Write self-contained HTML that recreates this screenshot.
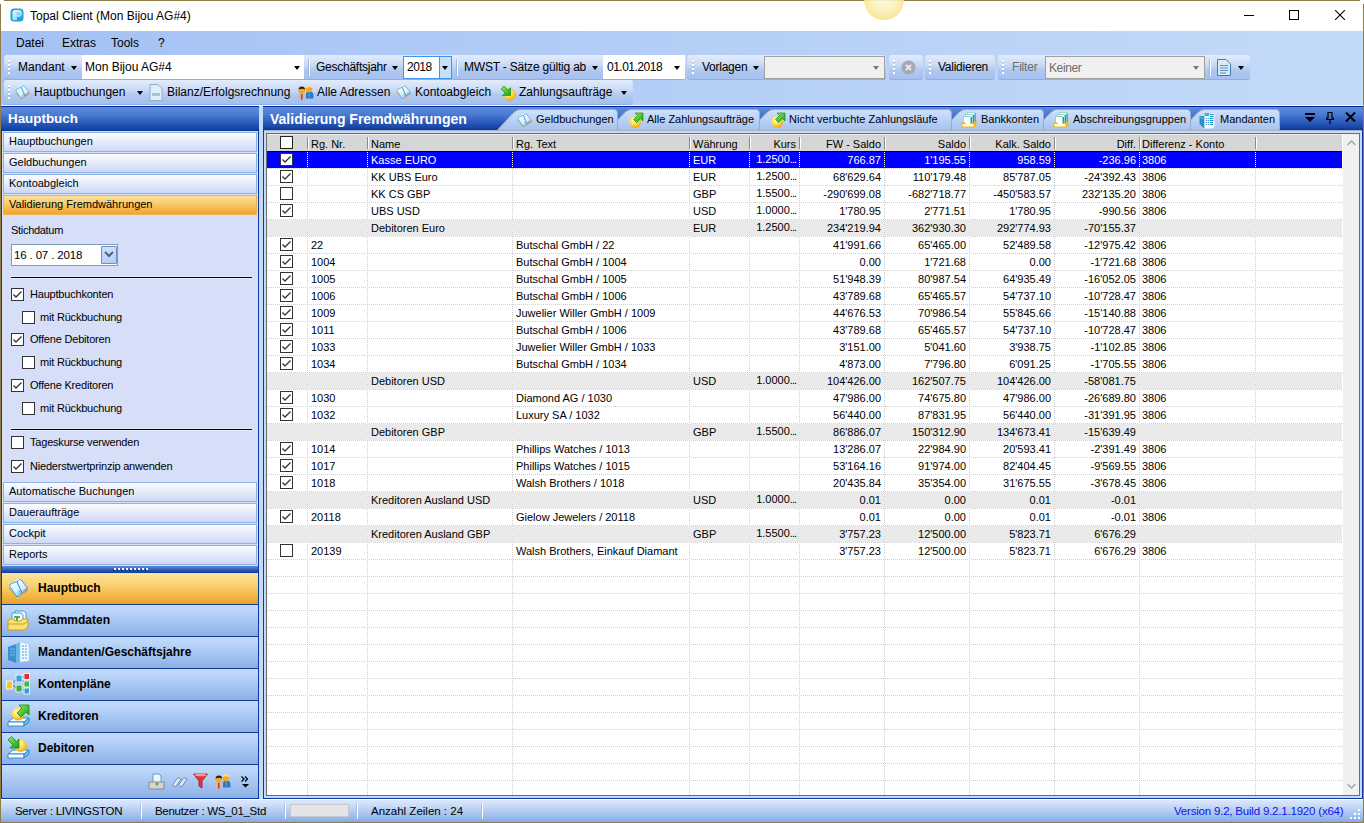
<!DOCTYPE html>
<html><head><meta charset="utf-8">
<style>
*{margin:0;padding:0;box-sizing:border-box}
html,body{width:1364px;height:823px;overflow:hidden;background:#c5daf8}
body{position:relative;font-family:"Liberation Sans",sans-serif;font-size:12px;color:#000}
.a{position:absolute}
.t{position:absolute;white-space:pre;line-height:14px}
/* window frame */
#frameT{left:4px;top:0;width:1356px;height:1px;background:#8f7d45}
#frameL{left:0;top:4px;width:1px;height:819px;background:#8f7d45}
#frameR{left:1363px;top:4px;width:1px;height:819px;background:#8f7d45}
#frameB{left:0;top:822px;width:1364px;height:1px;background:#8f7d45}
#dock{left:1px;top:31px;width:1362px;height:75px;background:linear-gradient(to right,#a3c1f4 0%,#b3cdf6 45%,#c4daf9 100%)}
.tb{position:absolute;height:25px;border-radius:3px;background:linear-gradient(to bottom,#e3ecfb 0%,#c9daf6 40%,#b0c9f0 60%,#a3bfee 100%);box-shadow:inset 0 -1px 0 #8fb0e4}
.grip{position:absolute;width:2px;height:14px;background:repeating-linear-gradient(to bottom,#fff 0 2px,#9ab5dc 2px 3px,transparent 3px 4px)}
.dd{position:absolute;width:0;height:0;border-left:3.5px solid transparent;border-right:3.5px solid transparent;border-top:4px solid #000}
.combo{position:absolute;background:#fff}
.vsep{position:absolute;width:2px;height:17px;border-left:1px solid #9fb7dc;border-right:1px solid #fff}
/* panels */
.phead{position:absolute;height:24px;background:linear-gradient(to bottom,#00259a 0,#00259a 1px,#5c8bdb 1px,#4a7bd2 35%,#2d5cbb 65%,#1845a8 90%,#003596 100%);color:#fff;font-weight:bold}
#lp{left:1px;top:106px;width:258px;height:693px;background:#d7def7;border:1px solid #0a3a9e;border-top:none}
.lbtn{position:absolute;left:3px;width:254px;height:20px;border:1px solid #8cb2e8;background:linear-gradient(to bottom,#fbfcff 0%,#e7edfb 45%,#cdd8f5 100%);font-size:11px;line-height:17px;padding-left:5px;white-space:pre}
.lbtn.on{border-color:#f0b050;background:linear-gradient(to bottom,#fde29a 0%,#f9c96a 45%,#f0a42c 100%)}
.nbtn{position:absolute;left:2px;width:256px;height:32px;background:linear-gradient(to bottom,#c5ddfb 0%,#abc9f3 45%,#8cb0e6 100%);border-bottom:1px solid #0a3a9e;font-weight:bold;font-size:12px;line-height:31px;padding-left:36px;white-space:pre}
.nbtn.on{background:linear-gradient(to bottom,#fce59b 0%,#f8cd6c 45%,#eea126 100%)}
.lbl{position:absolute;font-size:11px;white-space:pre;line-height:13px}
.chk{position:absolute;width:13px;height:13px;border:1px solid #333;background:#fff}
#rp{left:263px;top:106px;width:1100px;height:693px;background:#c5daf8;border:1px solid #0a3a9e;border-top:none}
#grid{left:266px;top:133px;width:1094px;height:663px;border:1px solid #6d6d6d;background:#fff;overflow:hidden}
#ghead{left:0;top:0;width:1075px;height:18px;background:#d6d6d6;border-bottom:1px solid #000;box-shadow:inset 0 1px 0 #ececec}
.hsep{position:absolute;top:3px;width:2px;height:12px;border-left:1px solid #8a8a8a;border-right:1px solid #fff}
.row{position:absolute;left:0;width:1075px;height:16px;font-size:11px}
.row.sel{background:#0000fe;color:#fff}
.row.grp{background:#eaeaea}
.c{position:absolute;top:0;line-height:17px;white-space:pre}
.cb{position:absolute;top:1px;width:13px;height:13px;line-height:0}
.hd{position:absolute;left:0;width:1075px;height:1px;background:repeating-linear-gradient(to right,#cecece 0 1px,#fff 1px 2px)}
.vds{position:absolute;width:1px;height:16px;background:repeating-linear-gradient(to bottom,#fff 0 1px,#0000fe 1px 2px)}
.vd{position:absolute;top:18px;width:1px;height:660px;background:repeating-linear-gradient(to bottom,#cecece 0 1px,#fff 1px 2px)}
#vscroll{left:1076px;top:0;width:16px;height:661px;background:#f0f0f0}
#status{left:1px;top:799px;width:1362px;height:23px;background:linear-gradient(to bottom,#ffffff 0,#ffffff 1px,#dce9fc 1px,#c3d7f6 35%,#a3c1ef 70%,#84abe7 100%)}
.ssep{position:absolute;top:5px;width:2px;height:16px;border-left:1px solid #a9bedd;border-right:1px solid #fff}
.tab{position:absolute;top:109px;height:21px;font-size:11px;line-height:21px;white-space:pre;color:#000}
</style></head><body>

<div class="a" style="left:0;top:0;width:1364px;height:31px;background:#fff"></div>
<!-- title bar -->

<svg class="a" style="left:10px;top:8px" width="14" height="14" viewBox="0 0 14 14"><defs><linearGradient id="tig" x1="0" y1="0" x2="1" y2="1"><stop offset="0" stop-color="#f4fbff"/><stop offset=".6" stop-color="#a9dcf4"/><stop offset="1" stop-color="#62bfea"/></linearGradient></defs><rect x="0.5" y="0.5" width="13" height="13" rx="3.5" fill="#1fa3da"/><path d="M2.5 3.5 Q3 2 5 2 H9.5 Q12 2.2 12 5.5 Q12 9 9 9 H7 V12 H3.5 Q2.5 12 2.5 11 Z" fill="url(#tig)"/><path d="M6.5 4.2 H9 Q10 4.5 10 5.6 Q10 6.8 9 7 H6.5 Z" fill="#6ec6ee" opacity=".6"/></svg>
<div class="t" style="left:30px;top:9px;font-size:12px">Topal Client (Mon Bijou AG#4)</div>
<div class="a" style="left:1244px;top:15px;width:10px;height:1px;background:#000"></div>
<div class="a" style="left:1289px;top:10px;width:10px;height:10px;border:1px solid #000"></div>
<svg class="a" style="left:1335px;top:10px" width="10" height="10" viewBox="0 0 10 10"><path d="M0 0 L10 10 M10 0 L0 10" stroke="#000" stroke-width="1.1"/></svg>

<!-- dock -->
<div class="a" id="dock"></div>
<div class="t" style="left:16px;top:36px">Datei</div>
<div class="t" style="left:62px;top:36px">Extras</div>
<div class="t" style="left:111px;top:36px">Tools</div>
<div class="t" style="left:158px;top:36px">?</div>

<!-- toolbar 1 -->
<div class="tb" style="left:4px;top:55px;width:682px"></div>
<div class="grip" style="left:8px;top:60px"></div>
<div class="t" style="left:18px;top:60px">Mandant</div>
<div class="dd" style="left:71px;top:66px"></div>
<div class="combo" style="left:82px;top:55px;width:222px;height:24px"></div>
<div class="t" style="left:85px;top:60px">Mon Bijou AG#4</div>
<div class="dd" style="left:294px;top:66px"></div>
<div class="vsep" style="left:308px;top:59px"></div>
<div class="t" style="left:316px;top:60px;letter-spacing:-0.25px">Geschäftsjahr</div>
<div class="dd" style="left:392px;top:66px"></div>
<div class="combo" style="left:403px;top:56px;width:49px;height:23px;border:1px solid #3c96f0"></div>
<div class="a" style="left:439px;top:57px;width:12px;height:21px;background:#c7e0fa;border-left:1px solid #3c96f0"></div>
<div class="t" style="left:407px;top:60px;letter-spacing:-0.5px">2018</div>
<div class="dd" style="left:442px;top:66px"></div>
<div class="vsep" style="left:456px;top:59px"></div>
<div class="t" style="left:464px;top:60px;letter-spacing:-0.2px">MWST - Sätze gültig ab</div>
<div class="dd" style="left:592px;top:66px"></div>
<div class="combo" style="left:603px;top:55px;width:82px;height:24px"></div>
<div class="t" style="left:607px;top:60px;letter-spacing:-0.5px">01.01.2018</div>
<div class="dd" style="left:674px;top:66px"></div>

<div class="tb" style="left:687px;top:55px;width:199px"></div>
<div class="grip" style="left:692px;top:60px"></div>
<div class="t" style="left:702px;top:60px;letter-spacing:-0.25px">Vorlagen</div>
<div class="dd" style="left:753px;top:66px"></div>
<div class="combo" style="left:764px;top:56px;width:121px;height:23px;background:#f0f0f0;border:1px solid #a0a0a0"></div>
<div class="dd" style="left:873px;top:66px;border-top-color:#777"></div>

<div class="tb" style="left:889px;top:55px;width:34px"></div>
<div class="grip" style="left:893px;top:60px"></div>
<svg class="a" style="left:901px;top:60px" width="15" height="15" viewBox="0 0 15 15"><circle cx="7.5" cy="7.5" r="7" fill="#a5a9b0"/><path d="M5 5 L10 10 M10 5 L5 10" stroke="#e8e8e8" stroke-width="2"/></svg>

<div class="tb" style="left:925px;top:55px;width:70px"></div>
<div class="grip" style="left:929px;top:60px"></div>
<div class="t" style="left:938px;top:60px;letter-spacing:-0.25px">Validieren</div>

<div class="tb" style="left:998px;top:55px;width:252px"></div>
<div class="grip" style="left:1002px;top:60px"></div>
<div class="t" style="left:1012px;top:60px;color:#6d6d6d;letter-spacing:-0.2px">Filter</div>
<div class="combo" style="left:1045px;top:56px;width:160px;height:23px;background:#f0f0f0;border:1px solid #a0a0a0"></div>
<div class="t" style="left:1049px;top:61px;color:#6d6d6d;letter-spacing:-0.4px">Keiner</div>
<div class="dd" style="left:1193px;top:66px;border-top-color:#777"></div>
<div class="vsep" style="left:1209px;top:59px"></div>
<svg class="a" style="left:1216px;top:59px" width="16" height="17" viewBox="0 0 16 17"><path d="M1.5 0.5 H10 L14.5 5 V16.5 H1.5 Z" fill="#dbe9f7" stroke="#3f7fb8"/><path d="M4 6.5 H12 M4 9 H12 M4 11.5 H12 M4 14 H10" stroke="#5b8fc4"/></svg>
<div class="dd" style="left:1238px;top:66px"></div>

<!-- toolbar 2 -->
<div class="tb" style="left:4px;top:80px;width:629px"></div>
<div class="grip" style="left:8px;top:85px"></div>
<svg class="a" style="left:14px;top:84px" width="17" height="17" viewBox="0 0 23 23"><path d="M1 8 L13 1 L22 12 L10 22 Z" fill="#fff"/><path d="M2 10 L10 20.5 L21 12 L21 13.5 L10 21.5 L2 11.5 Z" fill="#d0902c"/><path d="M2 8 L7 5.5 L10 4.5 L15 16 L10 20 Z" fill="url(#pg)" stroke="#2f9fdc" stroke-width="1"/><path d="M10 4.5 L13.5 2 L21 11.5 L15 16 Z" fill="url(#pg)" stroke="#2f9fdc" stroke-width="1"/><path d="M12 15 L20 12" stroke="#e03a3a" stroke-width="1" stroke-dasharray="1 1.5"/></svg>
<div class="t" style="left:34px;top:85px">Hauptbuchungen</div>
<div class="dd" style="left:137px;top:91px"></div>
<svg class="a" style="left:149px;top:84px" width="14" height="17" viewBox="0 0 14 17"><path d="M1 0.5 H9 L13 4.5 V16.5 H1 Z" fill="#e1ecf5" stroke="#8fb0cc"/><rect x="3" y="9" width="8" height="3" fill="#9cc6e6"/></svg>
<div class="t" style="left:167px;top:85px">Bilanz/Erfolgsrechnung</div>
<svg class="a" style="left:297px;top:84px" width="17" height="17" viewBox="0 0 17 17"><path d="M9 10 Q9 7.5 12.5 7.5 Q16.5 7.5 16.5 11 V14.5 H9 Z" fill="#2a78d8"/><path d="M12.2 8 V13" stroke="#5ac040" stroke-width="1"/><circle cx="12" cy="5" r="3.3" fill="#f7a81a"/><path d="M8.7 4 Q9 1 12 1 Q15.3 1 15.3 4 Q12 2.6 8.7 4 Z" fill="#f5dca0"/><path d="M1 12 Q1 9 4.5 9 Q8.5 9 8.5 12 V16 H1 Z" fill="#bdbdbd"/><path d="M4.8 10 V15.5" stroke="#e81010" stroke-width="1.3"/><circle cx="4.8" cy="6.5" r="3.3" fill="#f7a81a"/><path d="M1.5 5.5 Q1.8 2.5 4.8 2.5 Q8 2.5 8.1 5.5 Q4.8 4 1.5 5.5 Z" fill="#222"/></svg>
<div class="t" style="left:317px;top:85px">Alle Adressen</div>
<svg class="a" style="left:395px;top:84px" width="17" height="17" viewBox="0 0 23 23"><path d="M1 8 L13 1 L22 12 L10 22 Z" fill="#fff"/><path d="M2 10 L10 20.5 L21 12 L21 13.5 L10 21.5 L2 11.5 Z" fill="#d0902c"/><path d="M2 8 L7 5.5 L10 4.5 L15 16 L10 20 Z" fill="url(#pg)" stroke="#2f9fdc" stroke-width="1"/><path d="M10 4.5 L13.5 2 L21 11.5 L15 16 Z" fill="url(#pg)" stroke="#2f9fdc" stroke-width="1"/><path d="M12 15 L20 12" stroke="#e03a3a" stroke-width="1" stroke-dasharray="1 1.5"/></svg>
<div class="t" style="left:415px;top:85px">Kontoabgleich</div>
<div class="a" style="left:500px;top:85px;line-height:0"><svg width="16" height="16" viewBox="0 0 16 16"><circle cx="9.5" cy="9.5" r="6.3" fill="url(#gold)"/><path d="M10.5 2.5 V10.5 H2.5 L5 8 L1 4 L4 1 L8 5 Z" fill="url(#grn)" stroke="#109010" stroke-width=".7"/></svg></div>
<div class="t" style="left:519px;top:85px">Zahlungsaufträge</div>
<div class="dd" style="left:621px;top:91px"></div>

<div class="a" style="left:1px;top:105px;width:1362px;height:1px;background:#f4f8ff"></div>
<!-- left panel -->
<div class="a" id="lp"></div>
<div class="phead" style="left:1px;top:106px;width:258px;height:25px;font-size:13.4px;line-height:26px;padding-left:7px">Hauptbuch</div>
<div class="lbtn" style="top:132px">Hauptbuchungen</div>
<div class="lbtn" style="top:153px">Geldbuchungen</div>
<div class="lbtn" style="top:174px">Kontoabgleich</div>
<div class="lbtn on" style="top:195px">Validierung Fremdwährungen</div>
<div class="lbl" style="left:11px;top:224px;letter-spacing:-0.3px">Stichdatum</div>
<div class="a" style="left:11px;top:244px;width:107px;height:22px;background:#fff;border:1px solid #7f9db9"></div>
<div class="lbl" style="left:14px;top:249px;font-size:11.5px;letter-spacing:-0.15px">16 . 07 . 2018</div>
<div class="a" style="left:101px;top:246px;width:16px;height:18px;background:linear-gradient(#cde0fa,#b5d0f6);border:1px solid #6f8fbf;border-radius:1px"></div>
<svg class="a" style="left:104px;top:251px" width="10" height="7" viewBox="0 0 10 7"><path d="M1 1 L5 5 L9 1" stroke="#4d6185" stroke-width="2" fill="none"/></svg>
<div class="a" style="left:11px;top:276px;width:241px;height:3px;background:#000;border-top:1px solid #e8edfc;border-bottom:1px solid #e8edfc"></div>
<div class="a" style="left:11px;top:288px;width:13px;height:13px;line-height:0"><svg width="13" height="13" viewBox="0 0 13 13"><rect x="0.5" y="0.5" width="12" height="12" fill="#fff" stroke="#333"/><path d="M2.5 6.5 L5 9 L10.5 3.5" fill="none" stroke="#333" stroke-width="1.3"/></svg></div><div class="lbl" style="left:30px;top:288px;letter-spacing:-0.2px">Hauptbuchkonten</div><div class="a" style="left:22px;top:311px;width:13px;height:13px;line-height:0"><svg width="13" height="13" viewBox="0 0 13 13"><rect x="0.5" y="0.5" width="12" height="12" fill="#fff" stroke="#333"/></svg></div><div class="lbl" style="left:40px;top:311px;letter-spacing:-0.2px">mit Rückbuchung</div><div class="a" style="left:11px;top:333px;width:13px;height:13px;line-height:0"><svg width="13" height="13" viewBox="0 0 13 13"><rect x="0.5" y="0.5" width="12" height="12" fill="#fff" stroke="#333"/><path d="M2.5 6.5 L5 9 L10.5 3.5" fill="none" stroke="#333" stroke-width="1.3"/></svg></div><div class="lbl" style="left:30px;top:333px;letter-spacing:-0.2px">Offene Debitoren</div><div class="a" style="left:22px;top:356px;width:13px;height:13px;line-height:0"><svg width="13" height="13" viewBox="0 0 13 13"><rect x="0.5" y="0.5" width="12" height="12" fill="#fff" stroke="#333"/></svg></div><div class="lbl" style="left:40px;top:356px;letter-spacing:-0.2px">mit Rückbuchung</div><div class="a" style="left:11px;top:379px;width:13px;height:13px;line-height:0"><svg width="13" height="13" viewBox="0 0 13 13"><rect x="0.5" y="0.5" width="12" height="12" fill="#fff" stroke="#333"/><path d="M2.5 6.5 L5 9 L10.5 3.5" fill="none" stroke="#333" stroke-width="1.3"/></svg></div><div class="lbl" style="left:30px;top:379px;letter-spacing:-0.2px">Offene Kreditoren</div><div class="a" style="left:22px;top:402px;width:13px;height:13px;line-height:0"><svg width="13" height="13" viewBox="0 0 13 13"><rect x="0.5" y="0.5" width="12" height="12" fill="#fff" stroke="#333"/></svg></div><div class="lbl" style="left:40px;top:402px;letter-spacing:-0.2px">mit Rückbuchung</div><div class="a" style="left:11px;top:436px;width:13px;height:13px;line-height:0"><svg width="13" height="13" viewBox="0 0 13 13"><rect x="0.5" y="0.5" width="12" height="12" fill="#fff" stroke="#333"/></svg></div><div class="lbl" style="left:30px;top:436px;letter-spacing:-0.2px">Tageskurse verwenden</div><div class="a" style="left:11px;top:460px;width:13px;height:13px;line-height:0"><svg width="13" height="13" viewBox="0 0 13 13"><rect x="0.5" y="0.5" width="12" height="12" fill="#fff" stroke="#333"/><path d="M2.5 6.5 L5 9 L10.5 3.5" fill="none" stroke="#333" stroke-width="1.3"/></svg></div><div class="lbl" style="left:30px;top:460px;letter-spacing:-0.2px">Niederstwertprinzip anwenden</div>
<div class="a" style="left:11px;top:428px;width:241px;height:3px;background:#000;border-top:1px solid #e8edfc;border-bottom:1px solid #e8edfc"></div>
<div class="lbtn" style="top:482px">Automatische Buchungen</div>
<div class="lbtn" style="top:503px">Daueraufträge</div>
<div class="lbtn" style="top:524px">Cockpit</div>
<div class="lbtn" style="top:545px">Reports</div>
<div class="a" style="left:2px;top:566px;width:256px;height:7px;background:linear-gradient(#5a89da,#0a3aa0)"></div>
<div class="a" style="left:113px;top:569px;width:36px;height:2px;background:repeating-linear-gradient(to right,#1b2f6a 0 2px,transparent 2px 4px)"></div><div class="a" style="left:114px;top:568px;width:36px;height:2px;background:repeating-linear-gradient(to right,#fff 0 2px,transparent 2px 4px)"></div>
<div class="nbtn on" style="top:573px">Hauptbuch</div>
<div class="nbtn" style="top:605px">Stammdaten</div>
<div class="nbtn" style="top:637px">Mandanten/Geschäftsjahre</div>
<div class="nbtn" style="top:669px">Kontenpläne</div>
<div class="nbtn" style="top:701px">Kreditoren</div>
<div class="nbtn" style="top:733px">Debitoren</div>
<div class="a" style="left:2px;top:765px;width:256px;height:33px;background:linear-gradient(to bottom,#c5ddfb 0%,#abc9f3 45%,#8cb0e6 100%)"></div>
<svg width="0" height="0" style="position:absolute"><defs><radialGradient id="gold" cx=".4" cy=".35" r=".7"><stop offset="0" stop-color="#fffbd8"/><stop offset=".45" stop-color="#fde25a"/><stop offset="1" stop-color="#f2a010"/></radialGradient><linearGradient id="pg" x1="0" y1="0" x2="1" y2="1"><stop offset="0" stop-color="#ffffff"/><stop offset=".6" stop-color="#d8f0fc"/><stop offset="1" stop-color="#5ab8ea"/></linearGradient><linearGradient id="grn" x1="0" y1="0" x2="1" y2="1"><stop offset="0" stop-color="#8ef25a"/><stop offset="1" stop-color="#1e9a1e"/></linearGradient></defs></svg><svg class="a" style="left:7px;top:577px" width="23" height="23" viewBox="0 0 23 23"><path d="M1 8 L13 1 L22 12 L10 22 Z" fill="#fff"/><path d="M2 10 L10 20.5 L21 12 L21 13.5 L10 21.5 L2 11.5 Z" fill="#d0902c"/><path d="M2 8 L7 5.5 L10 4.5 L15 16 L10 20 Z" fill="url(#pg)" stroke="#2f9fdc" stroke-width="1"/><path d="M10 4.5 L13.5 2 L21 11.5 L15 16 Z" fill="url(#pg)" stroke="#2f9fdc" stroke-width="1"/><path d="M12 15 L20 12" stroke="#e03a3a" stroke-width="1" stroke-dasharray="1 1.5"/></svg><svg class="a" style="left:7px;top:610px" width="22" height="21" viewBox="0 0 22 21"><path d="M8 1 H17 L19 3 V13 H8 Z" fill="#eef8fd" stroke="#3ba0d6"/><path d="M5 3 H14 L16 5 V14 H5 Z" fill="#f6fbff" stroke="#3ba0d6"/><path d="M7 7 H13 M10 7 V14" stroke="#1f9a2a" stroke-width="1.6"/><path d="M1 11 L3 9 H7 L8 11 H14 L15 9 H21 V16 L18 20 H1 Z" fill="#f7e27a" stroke="#d69b12"/><path d="M1 14 H17 L21 11" stroke="#d69b12" fill="none"/></svg><svg class="a" style="left:7px;top:640px" width="23" height="24" viewBox="0 0 23 24"><path d="M1 7 L9 4 V23 L1 20 Z" fill="#3c8fd0"/><path d="M9 4 L13 2 V22 L9 23 Z" fill="#6ab8e8"/><path d="M13 2 L22 4 V21 L13 22 Z" fill="#f4fbff" stroke="#9ad2f0" stroke-width=".6"/><path d="M15 6 H21 M15 9 H21 M15 12 H21 M15 15 H21 M15 18 H21" stroke="#2f9fdc" stroke-width="1.2" stroke-dasharray="2 1"/><path d="M3 9 H8 M3 12 H8 M3 15 H8" stroke="#75b8e6" stroke-width="1"/></svg><svg class="a" style="left:6px;top:673px" width="24" height="22" viewBox="0 0 24 22"><path d="M6 10 L11 6 M6 12 L11 15 M15 5 L19 3 M15 6 L19 10 M15 15 L19 18" stroke="#5a6a7a" stroke-width="1"/><rect x="0.5" y="8" width="6" height="8" fill="#f7c81e" stroke="#fff" stroke-width=".8"/><rect x="10" y="2" width="6" height="7" fill="#35a2de" stroke="#fff" stroke-width=".8"/><rect x="10" y="12" width="6" height="7" fill="#3cb03a" stroke="#fff" stroke-width=".8"/><rect x="18" y="0.5" width="5.5" height="6" fill="#e2302a" stroke="#fff" stroke-width=".8"/><rect x="18" y="8" width="5.5" height="6" fill="#45b83a" stroke="#fff" stroke-width=".8"/><rect x="18" y="15" width="5.5" height="6" fill="#35a2de" stroke="#fff" stroke-width=".8"/></svg><svg class="a" style="left:7px;top:704px" width="23" height="24" viewBox="0 0 23 24"><path d="M1 18 L6 14 H22 L17 18 Z" fill="#f2fbff" stroke="#2a8fd8" stroke-width="1"/><path d="M1 18 H17 V22 H1 Z" fill="#ffffff" stroke="#2a8fd8" stroke-width="1"/><path d="M17 18 L22 14 V18 L17 22 Z" fill="#64bff0" stroke="#2a8fd8" stroke-width="1"/><circle cx="11" cy="10" r="6.5" fill="url(#gold)"/><path d="M12 1 H22 V11 L19 8 L14 13 L10 9 L15 4 Z" fill="url(#grn)" stroke="#109010" stroke-width=".8"/></svg><svg class="a" style="left:7px;top:736px" width="23" height="24" viewBox="0 0 23 24"><path d="M1 18 L6 14 H22 L17 18 Z" fill="#f2fbff" stroke="#2a8fd8" stroke-width="1"/><path d="M1 18 H17 V22 H1 Z" fill="#ffffff" stroke="#2a8fd8" stroke-width="1"/><path d="M17 18 L22 14 V18 L17 22 Z" fill="#64bff0" stroke="#2a8fd8" stroke-width="1"/><circle cx="13.5" cy="9.5" r="6.5" fill="url(#gold)"/><path d="M12 3 V12 H3 L6 9 L1 4 L4.5 0.5 L9.5 5.5 Z" fill="url(#grn)" stroke="#109010" stroke-width=".8"/></svg><svg class="a" style="left:148px;top:773px" width="17" height="17" viewBox="0 0 17 17"><path d="M5 1 H11 L13 3 V11 H5 Z" fill="#eef6fc" stroke="#5fa0d0"/><path d="M1 9 H16 V16 H1 Z" fill="#d4d4d4" stroke="#8a8a8a"/><path d="M7.5 11 H10.5 M9 9.5 V12.5" stroke="#2a2" stroke-width="1.2"/></svg><svg class="a" style="left:171px;top:774px" width="17" height="15" viewBox="0 0 17 15"><path d="M1.5 11 L7 3.5 L10 5 L4.5 13 Z M7.5 11 L13 3.5 L16 5 L10.5 13 Z" fill="#dfe8f5" stroke="#6b84b0" stroke-width=".9"/></svg><svg class="a" style="left:193px;top:773px" width="15" height="16" viewBox="0 0 15 16"><path d="M0.5 1 H14.5 L9 8 V15 L6 13 V8 Z" fill="#e0353a" stroke="#a01a1a" stroke-width=".8"/><ellipse cx="7.5" cy="2" rx="6" ry="1.3" fill="#f59a9a"/></svg><svg class="a" style="left:241px;top:776px" width="9" height="12" viewBox="0 0 9 12"><path d="M0.5 0.5 L3 3 L0.5 5.5 M4 0.5 L6.5 3 L4 5.5" stroke="#000" stroke-width="1.2" fill="none"/><path d="M1 8 H8 L4.5 11.5 Z" fill="#000"/></svg><svg class="a" style="left:214px;top:773px" width="17" height="17" viewBox="0 0 17 17"><path d="M9 10 Q9 7.5 12.5 7.5 Q16.5 7.5 16.5 11 V14.5 H9 Z" fill="#2a78d8"/><path d="M12.2 8 V13" stroke="#5ac040" stroke-width="1"/><circle cx="12" cy="5" r="3.3" fill="#f7a81a"/><path d="M8.7 4 Q9 1 12 1 Q15.3 1 15.3 4 Q12 2.6 8.7 4 Z" fill="#f5dca0"/><path d="M1 12 Q1 9 4.5 9 Q8.5 9 8.5 12 V16 H1 Z" fill="#bdbdbd"/><path d="M4.8 10 V15.5" stroke="#e81010" stroke-width="1.3"/><circle cx="4.8" cy="6.5" r="3.3" fill="#f7a81a"/><path d="M1.5 5.5 Q1.8 2.5 4.8 2.5 Q8 2.5 8.1 5.5 Q4.8 4 1.5 5.5 Z" fill="#222"/></svg>

<!-- right panel -->
<div class="a" id="rp"></div>
<div class="phead" style="left:263px;top:106px;width:1100px;font-size:14px;line-height:26px;padding-left:7px">Validierung Fremdwährungen</div>
<svg width="0" height="0" style="position:absolute"><defs><linearGradient id="tg" x1="0" y1="0" x2="0" y2="1"><stop offset="0" stop-color="#cfe1fb"/><stop offset=".5" stop-color="#bad2f7"/><stop offset="1" stop-color="#a4c1f0"/></linearGradient></defs></svg><svg class="a" style="left:1181px;top:109px" width="99" height="21" viewBox="0 0 99 21"><path d="M0 21.5 C7 14 13 7 17.5 3 Q20 0.5 23.5 0.5 H95 Q98.5 0.5 98.5 4 V21.5" fill="url(#tg)" stroke="#98aac6" stroke-width="1"/></svg><div class="a" style="left:1199px;top:112px;line-height:0"><svg width="16" height="17" viewBox="0 0 16 17"><path d="M0.5 4 H5.5 V16.5 L0.5 12 Z" fill="#2d8ccc"/><path d="M1.5 5 L4 7" stroke="#5ac8c0" stroke-width="1.5"/><path d="M5.5 1 H10.5 V16.5 H5.5 Z" fill="#f8fdff"/><rect x="5.5" y="1" width="5" height="3" fill="#3dbfb0"/><path d="M6.8 6.5 h1 M8.8 6.5 h1 M6.8 8.5 h1 M8.8 8.5 h1 M6.8 10.5 h1 M8.8 10.5 h1 M6.8 12.5 h1 M8.8 12.5 h1" stroke="#1a7fc8" stroke-width="1.2"/><path d="M10.5 1.5 H15.5 V15 L12 16.5 H10.5 Z" fill="#fff"/><path d="M11 2.5 H14.5 M11 4.5 H14.5 M11 6.5 H14.5 M11 8.5 H14.5 M11 10.5 H14 M11 12.5 H14" stroke="#1a9ad8" stroke-width="1.1"/></svg></div><div class="tab" style="left:1220px">Mandanten</div><svg class="a" style="left:1034px;top:109px" width="157" height="21" viewBox="0 0 157 21"><path d="M0 21.5 C7 14 13 7 17.5 3 Q20 0.5 23.5 0.5 H153 Q156.5 0.5 156.5 4 V21.5" fill="url(#tg)" stroke="#98aac6" stroke-width="1"/></svg><div class="a" style="left:1053px;top:112px;line-height:0"><svg width="16" height="16" viewBox="0 0 16 16"><rect x="6.5" y="0.5" width="7" height="9" fill="#fff" stroke="#8fd3c8" stroke-width=".9"/><rect x="4.5" y="2.5" width="7" height="9" fill="#fff" stroke="#8fd3c8" stroke-width=".9"/><rect x="2.5" y="4.5" width="7" height="9" fill="#fff" stroke="#8fd3c8" stroke-width=".9"/><path d="M10.5 5 V13 M12.5 3 V12 M14.2 1.5 V10" stroke="#1f8fd8" stroke-width="1"/><path d="M0.5 10.5 H4 L5.5 12.5 H8.5 L10 10.5 H13 L15.5 8.5 V13 L13 15.5 H0.5 Z" fill="#f2b90c"/><path d="M1.5 12 H12.5 V14.5 H1.5 Z" fill="#fffbe8"/></svg></div><div class="tab" style="left:1073px">Abschreibungsgruppen</div><svg class="a" style="left:942px;top:109px" width="102" height="21" viewBox="0 0 102 21"><path d="M0 21.5 C7 14 13 7 17.5 3 Q20 0.5 23.5 0.5 H98 Q101.5 0.5 101.5 4 V21.5" fill="url(#tg)" stroke="#98aac6" stroke-width="1"/></svg><div class="a" style="left:961px;top:112px;line-height:0"><svg width="16" height="16" viewBox="0 0 16 16"><rect x="6.5" y="0.5" width="7" height="9" fill="#fff" stroke="#8fd3c8" stroke-width=".9"/><rect x="4.5" y="2.5" width="7" height="9" fill="#fff" stroke="#8fd3c8" stroke-width=".9"/><rect x="2.5" y="4.5" width="7" height="9" fill="#fff" stroke="#8fd3c8" stroke-width=".9"/><path d="M10.5 5 V13 M12.5 3 V12 M14.2 1.5 V10" stroke="#1f8fd8" stroke-width="1"/><path d="M0.5 10.5 H4 L5.5 12.5 H8.5 L10 10.5 H13 L15.5 8.5 V13 L13 15.5 H0.5 Z" fill="#f2b90c"/><path d="M1.5 12 H12.5 V14.5 H1.5 Z" fill="#fffbe8"/></svg></div><div class="tab" style="left:981px">Bankkonten</div><svg class="a" style="left:750px;top:109px" width="202" height="21" viewBox="0 0 202 21"><path d="M0 21.5 C7 14 13 7 17.5 3 Q20 0.5 23.5 0.5 H198 Q201.5 0.5 201.5 4 V21.5" fill="url(#tg)" stroke="#98aac6" stroke-width="1"/></svg><div class="a" style="left:770px;top:112px;line-height:0"><svg width="16" height="16" viewBox="0 0 16 16"><circle cx="7" cy="10" r="6" fill="url(#gold)"/><path d="M7 1 H15 V9 L12.5 6.5 L8.5 10.5 L5.5 7.5 L9.5 3.5 Z" fill="url(#grn)" stroke="#109010" stroke-width=".7"/></svg></div><div class="tab" style="left:789px">Nicht verbuchte Zahlungsläufe</div><svg class="a" style="left:608px;top:109px" width="152" height="21" viewBox="0 0 152 21"><path d="M0 21.5 C7 14 13 7 17.5 3 Q20 0.5 23.5 0.5 H148 Q151.5 0.5 151.5 4 V21.5" fill="url(#tg)" stroke="#98aac6" stroke-width="1"/></svg><div class="a" style="left:628px;top:112px;line-height:0"><svg width="16" height="16" viewBox="0 0 16 16"><circle cx="7" cy="10" r="6" fill="url(#gold)"/><path d="M7 1 H15 V9 L12.5 6.5 L8.5 10.5 L5.5 7.5 L9.5 3.5 Z" fill="url(#grn)" stroke="#109010" stroke-width=".7"/></svg></div><div class="tab" style="left:647px">Alle Zahlungsaufträge</div><svg class="a" style="left:497px;top:109px" width="121" height="21" viewBox="0 0 121 21"><path d="M0 21.5 C7 14 13 7 17.5 3 Q20 0.5 23.5 0.5 H117 Q120.5 0.5 120.5 4 V21.5" fill="url(#tg)" stroke="#98aac6" stroke-width="1"/></svg><div class="a" style="left:516px;top:112px;line-height:0"><svg width="17" height="17" viewBox="0 0 23 23"><path d="M1 8 L13 1 L22 12 L10 22 Z" fill="#fff"/><path d="M2 10 L10 20.5 L21 12 L21 13.5 L10 21.5 L2 11.5 Z" fill="#d0902c"/><path d="M2 8 L7 5.5 L10 4.5 L15 16 L10 20 Z" fill="url(#pg)" stroke="#2f9fdc" stroke-width="1"/><path d="M10 4.5 L13.5 2 L21 11.5 L15 16 Z" fill="url(#pg)" stroke="#2f9fdc" stroke-width="1"/><path d="M12 15 L20 12" stroke="#e03a3a" stroke-width="1" stroke-dasharray="1 1.5"/></svg></div><div class="tab" style="left:536px">Geldbuchungen</div><svg class="a" style="left:1304px;top:113px" width="12" height="10" viewBox="0 0 12 10"><rect x="1" y="0" width="10" height="2" fill="#000"/><path d="M1 4 H11 L6 9 Z" fill="#000"/></svg><svg class="a" style="left:1326px;top:112px" width="8" height="12" viewBox="0 0 8 12"><path d="M2 0.5 H6 V6 H7.5 V7.5 H0.5 V6 H2 Z" fill="none" stroke="#000" stroke-width="1.2"/><path d="M4 7.5 V12" stroke="#000" stroke-width="1.2"/></svg><svg class="a" style="left:1345px;top:112px" width="11" height="10" viewBox="0 0 11 10"><path d="M1 0.5 L10 9.5 M10 0.5 L1 9.5" stroke="#000" stroke-width="2"/></svg>
<div class="a" style="left:264px;top:130px;width:1098px;height:1px;background:#a9b0bc"></div>
<div class="a" id="grid">
  <div class="a" id="ghead">
    <div class="a" style="left:13px;top:2px;width:13px;height:13px;border:1.5px solid #222;background:#fff"></div>
    <span class="c" style="left:44px;top:2px;font-size:11px">Rg. Nr.</span>
    <span class="c" style="left:104px;top:2px;font-size:11px">Name</span>
    <span class="c" style="left:249px;top:2px;font-size:11px">Rg. Text</span>
    <span class="c" style="left:426px;top:2px;font-size:11px">Währung</span>
    <span class="c" style="right:546px;top:2px;font-size:11px">Kurs</span>
    <span class="c" style="right:461px;top:2px;font-size:11px">FW - Saldo</span>
    <span class="c" style="right:376px;top:2px;font-size:11px">Saldo</span>
    <span class="c" style="right:291px;top:2px;font-size:11px">Kalk. Saldo</span>
    <span class="c" style="right:206px;top:2px;font-size:11px">Diff.</span>
    <span class="c" style="left:875px;top:2px;font-size:11px">Differenz - Konto</span>
    <div class="hsep" style="left:40px"></div><div class="hsep" style="left:100px"></div><div class="hsep" style="left:245px"></div><div class="hsep" style="left:422px"></div><div class="hsep" style="left:482px"></div><div class="hsep" style="left:532px"></div><div class="hsep" style="left:617px"></div><div class="hsep" style="left:702px"></div><div class="hsep" style="left:787px"></div><div class="hsep" style="left:872px"></div><div class="hsep" style="left:988px"></div>
  </div>
  <div class="row sel" style="top:18px"><div class="cb" style="left:13px"><svg width="13" height="13" viewBox="0 0 13 13"><rect x="0.5" y="0.5" width="12" height="12" fill="#fff" stroke="#333"/><path d="M2.5 6.5 L5 9 L10.5 3.5" fill="none" stroke="#333" stroke-width="1.3"/></svg></div><span class="c" style="left:104px">Kasse EURO</span><span class="c" style="left:426px">EUR</span><span class="c r" style="right:546px;top:-1px">1.2500<span style="letter-spacing:-1px">...</span></span><span class="c r" style="right:461px">766.87</span><span class="c r" style="right:376px">1'195.55</span><span class="c r" style="right:291px">958.59</span><span class="c r" style="right:206px">-236.96</span><span class="c" style="left:875px">3806</span></div><div class="row" style="top:35px"><div class="cb" style="left:13px"><svg width="13" height="13" viewBox="0 0 13 13"><rect x="0.5" y="0.5" width="12" height="12" fill="#fff" stroke="#333"/><path d="M2.5 6.5 L5 9 L10.5 3.5" fill="none" stroke="#333" stroke-width="1.3"/></svg></div><span class="c" style="left:104px">KK UBS Euro</span><span class="c" style="left:426px">EUR</span><span class="c r" style="right:546px;top:-1px">1.2500<span style="letter-spacing:-1px">...</span></span><span class="c r" style="right:461px">68'629.64</span><span class="c r" style="right:376px">110'179.48</span><span class="c r" style="right:291px">85'787.05</span><span class="c r" style="right:206px">-24'392.43</span><span class="c" style="left:875px">3806</span></div><div class="row" style="top:52px"><div class="cb" style="left:13px"><svg width="13" height="13" viewBox="0 0 13 13"><rect x="0.5" y="0.5" width="12" height="12" fill="#fff" stroke="#333"/></svg></div><span class="c" style="left:104px">KK CS GBP</span><span class="c" style="left:426px">GBP</span><span class="c r" style="right:546px;top:-1px">1.5500<span style="letter-spacing:-1px">...</span></span><span class="c r" style="right:461px">-290'699.08</span><span class="c r" style="right:376px">-682'718.77</span><span class="c r" style="right:291px">-450'583.57</span><span class="c r" style="right:206px">232'135.20</span><span class="c" style="left:875px">3806</span></div><div class="row" style="top:69px"><div class="cb" style="left:13px"><svg width="13" height="13" viewBox="0 0 13 13"><rect x="0.5" y="0.5" width="12" height="12" fill="#fff" stroke="#333"/><path d="M2.5 6.5 L5 9 L10.5 3.5" fill="none" stroke="#333" stroke-width="1.3"/></svg></div><span class="c" style="left:104px">UBS USD</span><span class="c" style="left:426px">USD</span><span class="c r" style="right:546px;top:-1px">1.0000<span style="letter-spacing:-1px">...</span></span><span class="c r" style="right:461px">1'780.95</span><span class="c r" style="right:376px">2'771.51</span><span class="c r" style="right:291px">1'780.95</span><span class="c r" style="right:206px">-990.56</span><span class="c" style="left:875px">3806</span></div><div class="row grp" style="top:86px"><span class="c" style="left:104px">Debitoren Euro</span><span class="c" style="left:426px">EUR</span><span class="c r" style="right:546px;top:-1px">1.2500<span style="letter-spacing:-1px">...</span></span><span class="c r" style="right:461px">234'219.94</span><span class="c r" style="right:376px">362'930.30</span><span class="c r" style="right:291px">292'774.93</span><span class="c r" style="right:206px">-70'155.37</span></div><div class="row" style="top:103px"><div class="cb" style="left:13px"><svg width="13" height="13" viewBox="0 0 13 13"><rect x="0.5" y="0.5" width="12" height="12" fill="#fff" stroke="#333"/><path d="M2.5 6.5 L5 9 L10.5 3.5" fill="none" stroke="#333" stroke-width="1.3"/></svg></div><span class="c" style="left:44px">22</span><span class="c" style="left:249px">Butschal GmbH / 22</span><span class="c r" style="right:461px">41'991.66</span><span class="c r" style="right:376px">65'465.00</span><span class="c r" style="right:291px">52'489.58</span><span class="c r" style="right:206px">-12'975.42</span><span class="c" style="left:875px">3806</span></div><div class="row" style="top:120px"><div class="cb" style="left:13px"><svg width="13" height="13" viewBox="0 0 13 13"><rect x="0.5" y="0.5" width="12" height="12" fill="#fff" stroke="#333"/><path d="M2.5 6.5 L5 9 L10.5 3.5" fill="none" stroke="#333" stroke-width="1.3"/></svg></div><span class="c" style="left:44px">1004</span><span class="c" style="left:249px">Butschal GmbH / 1004</span><span class="c r" style="right:461px">0.00</span><span class="c r" style="right:376px">1'721.68</span><span class="c r" style="right:291px">0.00</span><span class="c r" style="right:206px">-1'721.68</span><span class="c" style="left:875px">3806</span></div><div class="row" style="top:137px"><div class="cb" style="left:13px"><svg width="13" height="13" viewBox="0 0 13 13"><rect x="0.5" y="0.5" width="12" height="12" fill="#fff" stroke="#333"/><path d="M2.5 6.5 L5 9 L10.5 3.5" fill="none" stroke="#333" stroke-width="1.3"/></svg></div><span class="c" style="left:44px">1005</span><span class="c" style="left:249px">Butschal GmbH / 1005</span><span class="c r" style="right:461px">51'948.39</span><span class="c r" style="right:376px">80'987.54</span><span class="c r" style="right:291px">64'935.49</span><span class="c r" style="right:206px">-16'052.05</span><span class="c" style="left:875px">3806</span></div><div class="row" style="top:154px"><div class="cb" style="left:13px"><svg width="13" height="13" viewBox="0 0 13 13"><rect x="0.5" y="0.5" width="12" height="12" fill="#fff" stroke="#333"/><path d="M2.5 6.5 L5 9 L10.5 3.5" fill="none" stroke="#333" stroke-width="1.3"/></svg></div><span class="c" style="left:44px">1006</span><span class="c" style="left:249px">Butschal GmbH / 1006</span><span class="c r" style="right:461px">43'789.68</span><span class="c r" style="right:376px">65'465.57</span><span class="c r" style="right:291px">54'737.10</span><span class="c r" style="right:206px">-10'728.47</span><span class="c" style="left:875px">3806</span></div><div class="row" style="top:171px"><div class="cb" style="left:13px"><svg width="13" height="13" viewBox="0 0 13 13"><rect x="0.5" y="0.5" width="12" height="12" fill="#fff" stroke="#333"/><path d="M2.5 6.5 L5 9 L10.5 3.5" fill="none" stroke="#333" stroke-width="1.3"/></svg></div><span class="c" style="left:44px">1009</span><span class="c" style="left:249px">Juwelier Willer GmbH / 1009</span><span class="c r" style="right:461px">44'676.53</span><span class="c r" style="right:376px">70'986.54</span><span class="c r" style="right:291px">55'845.66</span><span class="c r" style="right:206px">-15'140.88</span><span class="c" style="left:875px">3806</span></div><div class="row" style="top:188px"><div class="cb" style="left:13px"><svg width="13" height="13" viewBox="0 0 13 13"><rect x="0.5" y="0.5" width="12" height="12" fill="#fff" stroke="#333"/><path d="M2.5 6.5 L5 9 L10.5 3.5" fill="none" stroke="#333" stroke-width="1.3"/></svg></div><span class="c" style="left:44px">1011</span><span class="c" style="left:249px">Butschal GmbH / 1006</span><span class="c r" style="right:461px">43'789.68</span><span class="c r" style="right:376px">65'465.57</span><span class="c r" style="right:291px">54'737.10</span><span class="c r" style="right:206px">-10'728.47</span><span class="c" style="left:875px">3806</span></div><div class="row" style="top:205px"><div class="cb" style="left:13px"><svg width="13" height="13" viewBox="0 0 13 13"><rect x="0.5" y="0.5" width="12" height="12" fill="#fff" stroke="#333"/><path d="M2.5 6.5 L5 9 L10.5 3.5" fill="none" stroke="#333" stroke-width="1.3"/></svg></div><span class="c" style="left:44px">1033</span><span class="c" style="left:249px">Juwelier Willer GmbH / 1033</span><span class="c r" style="right:461px">3'151.00</span><span class="c r" style="right:376px">5'041.60</span><span class="c r" style="right:291px">3'938.75</span><span class="c r" style="right:206px">-1'102.85</span><span class="c" style="left:875px">3806</span></div><div class="row" style="top:222px"><div class="cb" style="left:13px"><svg width="13" height="13" viewBox="0 0 13 13"><rect x="0.5" y="0.5" width="12" height="12" fill="#fff" stroke="#333"/><path d="M2.5 6.5 L5 9 L10.5 3.5" fill="none" stroke="#333" stroke-width="1.3"/></svg></div><span class="c" style="left:44px">1034</span><span class="c" style="left:249px">Butschal GmbH / 1034</span><span class="c r" style="right:461px">4'873.00</span><span class="c r" style="right:376px">7'796.80</span><span class="c r" style="right:291px">6'091.25</span><span class="c r" style="right:206px">-1'705.55</span><span class="c" style="left:875px">3806</span></div><div class="row grp" style="top:239px"><span class="c" style="left:104px">Debitoren USD</span><span class="c" style="left:426px">USD</span><span class="c r" style="right:546px;top:-1px">1.0000<span style="letter-spacing:-1px">...</span></span><span class="c r" style="right:461px">104'426.00</span><span class="c r" style="right:376px">162'507.75</span><span class="c r" style="right:291px">104'426.00</span><span class="c r" style="right:206px">-58'081.75</span></div><div class="row" style="top:256px"><div class="cb" style="left:13px"><svg width="13" height="13" viewBox="0 0 13 13"><rect x="0.5" y="0.5" width="12" height="12" fill="#fff" stroke="#333"/><path d="M2.5 6.5 L5 9 L10.5 3.5" fill="none" stroke="#333" stroke-width="1.3"/></svg></div><span class="c" style="left:44px">1030</span><span class="c" style="left:249px">Diamond AG / 1030</span><span class="c r" style="right:461px">47'986.00</span><span class="c r" style="right:376px">74'675.80</span><span class="c r" style="right:291px">47'986.00</span><span class="c r" style="right:206px">-26'689.80</span><span class="c" style="left:875px">3806</span></div><div class="row" style="top:273px"><div class="cb" style="left:13px"><svg width="13" height="13" viewBox="0 0 13 13"><rect x="0.5" y="0.5" width="12" height="12" fill="#fff" stroke="#333"/><path d="M2.5 6.5 L5 9 L10.5 3.5" fill="none" stroke="#333" stroke-width="1.3"/></svg></div><span class="c" style="left:44px">1032</span><span class="c" style="left:249px">Luxury SA / 1032</span><span class="c r" style="right:461px">56'440.00</span><span class="c r" style="right:376px">87'831.95</span><span class="c r" style="right:291px">56'440.00</span><span class="c r" style="right:206px">-31'391.95</span><span class="c" style="left:875px">3806</span></div><div class="row grp" style="top:290px"><span class="c" style="left:104px">Debitoren GBP</span><span class="c" style="left:426px">GBP</span><span class="c r" style="right:546px;top:-1px">1.5500<span style="letter-spacing:-1px">...</span></span><span class="c r" style="right:461px">86'886.07</span><span class="c r" style="right:376px">150'312.90</span><span class="c r" style="right:291px">134'673.41</span><span class="c r" style="right:206px">-15'639.49</span></div><div class="row" style="top:307px"><div class="cb" style="left:13px"><svg width="13" height="13" viewBox="0 0 13 13"><rect x="0.5" y="0.5" width="12" height="12" fill="#fff" stroke="#333"/><path d="M2.5 6.5 L5 9 L10.5 3.5" fill="none" stroke="#333" stroke-width="1.3"/></svg></div><span class="c" style="left:44px">1014</span><span class="c" style="left:249px">Phillips Watches / 1013</span><span class="c r" style="right:461px">13'286.07</span><span class="c r" style="right:376px">22'984.90</span><span class="c r" style="right:291px">20'593.41</span><span class="c r" style="right:206px">-2'391.49</span><span class="c" style="left:875px">3806</span></div><div class="row" style="top:324px"><div class="cb" style="left:13px"><svg width="13" height="13" viewBox="0 0 13 13"><rect x="0.5" y="0.5" width="12" height="12" fill="#fff" stroke="#333"/><path d="M2.5 6.5 L5 9 L10.5 3.5" fill="none" stroke="#333" stroke-width="1.3"/></svg></div><span class="c" style="left:44px">1017</span><span class="c" style="left:249px">Phillips Watches / 1015</span><span class="c r" style="right:461px">53'164.16</span><span class="c r" style="right:376px">91'974.00</span><span class="c r" style="right:291px">82'404.45</span><span class="c r" style="right:206px">-9'569.55</span><span class="c" style="left:875px">3806</span></div><div class="row" style="top:341px"><div class="cb" style="left:13px"><svg width="13" height="13" viewBox="0 0 13 13"><rect x="0.5" y="0.5" width="12" height="12" fill="#fff" stroke="#333"/><path d="M2.5 6.5 L5 9 L10.5 3.5" fill="none" stroke="#333" stroke-width="1.3"/></svg></div><span class="c" style="left:44px">1018</span><span class="c" style="left:249px">Walsh Brothers / 1018</span><span class="c r" style="right:461px">20'435.84</span><span class="c r" style="right:376px">35'354.00</span><span class="c r" style="right:291px">31'675.55</span><span class="c r" style="right:206px">-3'678.45</span><span class="c" style="left:875px">3806</span></div><div class="row grp" style="top:358px"><span class="c" style="left:104px">Kreditoren Ausland USD</span><span class="c" style="left:426px">USD</span><span class="c r" style="right:546px;top:-1px">1.0000<span style="letter-spacing:-1px">...</span></span><span class="c r" style="right:461px">0.01</span><span class="c r" style="right:376px">0.00</span><span class="c r" style="right:291px">0.01</span><span class="c r" style="right:206px">-0.01</span></div><div class="row" style="top:375px"><div class="cb" style="left:13px"><svg width="13" height="13" viewBox="0 0 13 13"><rect x="0.5" y="0.5" width="12" height="12" fill="#fff" stroke="#333"/><path d="M2.5 6.5 L5 9 L10.5 3.5" fill="none" stroke="#333" stroke-width="1.3"/></svg></div><span class="c" style="left:44px">20118</span><span class="c" style="left:249px">Gielow Jewelers / 20118</span><span class="c r" style="right:461px">0.01</span><span class="c r" style="right:376px">0.00</span><span class="c r" style="right:291px">0.01</span><span class="c r" style="right:206px">-0.01</span><span class="c" style="left:875px">3806</span></div><div class="row grp" style="top:392px"><span class="c" style="left:104px">Kreditoren Ausland GBP</span><span class="c" style="left:426px">GBP</span><span class="c r" style="right:546px;top:-1px">1.5500<span style="letter-spacing:-1px">...</span></span><span class="c r" style="right:461px">3'757.23</span><span class="c r" style="right:376px">12'500.00</span><span class="c r" style="right:291px">5'823.71</span><span class="c r" style="right:206px">6'676.29</span></div><div class="row" style="top:409px"><div class="cb" style="left:13px"><svg width="13" height="13" viewBox="0 0 13 13"><rect x="0.5" y="0.5" width="12" height="12" fill="#fff" stroke="#333"/></svg></div><span class="c" style="left:44px">20139</span><span class="c" style="left:249px">Walsh Brothers, Einkauf Diamant</span><span class="c r" style="right:461px">3'757.23</span><span class="c r" style="right:376px">12'500.00</span><span class="c r" style="right:291px">5'823.71</span><span class="c r" style="right:206px">6'676.29</span><span class="c" style="left:875px">3806</span></div><div class="hd" style="top:34px"></div><div class="hd" style="top:51px"></div><div class="hd" style="top:68px"></div><div class="hd" style="top:85px"></div><div class="hd" style="top:102px"></div><div class="hd" style="top:119px"></div><div class="hd" style="top:136px"></div><div class="hd" style="top:153px"></div><div class="hd" style="top:170px"></div><div class="hd" style="top:187px"></div><div class="hd" style="top:204px"></div><div class="hd" style="top:221px"></div><div class="hd" style="top:238px"></div><div class="hd" style="top:255px"></div><div class="hd" style="top:272px"></div><div class="hd" style="top:289px"></div><div class="hd" style="top:306px"></div><div class="hd" style="top:323px"></div><div class="hd" style="top:340px"></div><div class="hd" style="top:357px"></div><div class="hd" style="top:374px"></div><div class="hd" style="top:391px"></div><div class="hd" style="top:408px"></div><div class="hd" style="top:425px"></div><div class="hd" style="top:442px"></div><div class="hd" style="top:459px"></div><div class="hd" style="top:476px"></div><div class="hd" style="top:493px"></div><div class="hd" style="top:510px"></div><div class="hd" style="top:527px"></div><div class="hd" style="top:544px"></div><div class="hd" style="top:561px"></div><div class="hd" style="top:578px"></div><div class="hd" style="top:595px"></div><div class="hd" style="top:612px"></div><div class="hd" style="top:629px"></div><div class="hd" style="top:646px"></div><div class="vd" style="left:40px"></div><div class="vd" style="left:100px"></div><div class="vd" style="left:245px"></div><div class="vd" style="left:422px"></div><div class="vd" style="left:482px"></div><div class="vd" style="left:532px"></div><div class="vd" style="left:617px"></div><div class="vd" style="left:702px"></div><div class="vd" style="left:787px"></div><div class="vd" style="left:872px"></div><div class="vd" style="left:988px"></div><div class="vds" style="left:40px;top:18px"></div><div class="vds" style="left:100px;top:18px"></div><div class="vds" style="left:245px;top:18px"></div><div class="vds" style="left:422px;top:18px"></div><div class="vds" style="left:482px;top:18px"></div><div class="vds" style="left:532px;top:18px"></div><div class="vds" style="left:617px;top:18px"></div><div class="vds" style="left:702px;top:18px"></div><div class="vds" style="left:787px;top:18px"></div><div class="vds" style="left:872px;top:18px"></div><div class="vds" style="left:988px;top:18px"></div>
  <div class="a" id="vscroll">
    <svg class="a" style="left:4px;top:6px" width="9" height="6" viewBox="0 0 9 6"><path d="M0.5 5 L4.5 1 L8.5 5" stroke="#a6a6a6" stroke-width="1.5" fill="none"/></svg>
    <svg class="a" style="left:4px;top:649px" width="9" height="6" viewBox="0 0 9 6"><path d="M0.5 1 L4.5 5 L8.5 1" stroke="#a6a6a6" stroke-width="1.5" fill="none"/></svg>
  </div>
</div>

<!-- status bar -->
<div class="a" id="status"></div>
<div class="t" style="left:15px;top:804px;font-size:11.5px;letter-spacing:-0.3px">Server : LIVINGSTON</div>
<div class="ssep" style="left:140px;top:803px"></div>
<div class="t" style="left:155px;top:804px;font-size:11.5px;letter-spacing:-0.3px">Benutzer : WS_01_Std</div>
<div class="ssep" style="left:284px;top:803px"></div>
<div class="a" style="left:290px;top:804px;width:59px;height:13px;background:#e4e4e4;border:1px solid #c8c8c8"></div>
<div class="ssep" style="left:356px;top:803px"></div>
<div class="t" style="left:371px;top:804px;font-size:11.5px">Anzahl Zeilen : 24</div>
<div class="ssep" style="left:481px;top:803px"></div>
<div class="t" style="left:1174px;top:804px;font-size:11.5px;letter-spacing:-0.2px;color:#1010f0">Version 9.2, Build 9.2.1.1920 (x64)</div>
<svg class="a" style="left:1350px;top:809px" width="11" height="11" viewBox="0 0 11 11"><g fill="#fff"><rect x="8" y="0" width="2" height="2"/><rect x="4" y="4" width="2" height="2"/><rect x="8" y="4" width="2" height="2"/><rect x="0" y="8" width="2" height="2"/><rect x="4" y="8" width="2" height="2"/><rect x="8" y="8" width="2" height="2"/></g><g fill="#9cb3d6"><rect x="7" y="-1" width="2" height="2" opacity="0"/></g></svg>
<div class="a" id="frameT"></div>
<div class="a" id="frameL"></div>
<div class="a" id="frameR"></div>
<div class="a" id="frameB"></div>
<div class="a" style="left:864px;top:-20px;width:40px;height:40px;border-radius:50%;background:radial-gradient(circle at 50% 45%,#fdf9e2 0%,#fbf0b8 45%,#f8e38a 75%,#f2cf55 100%);opacity:.92"></div>
</body></html>
